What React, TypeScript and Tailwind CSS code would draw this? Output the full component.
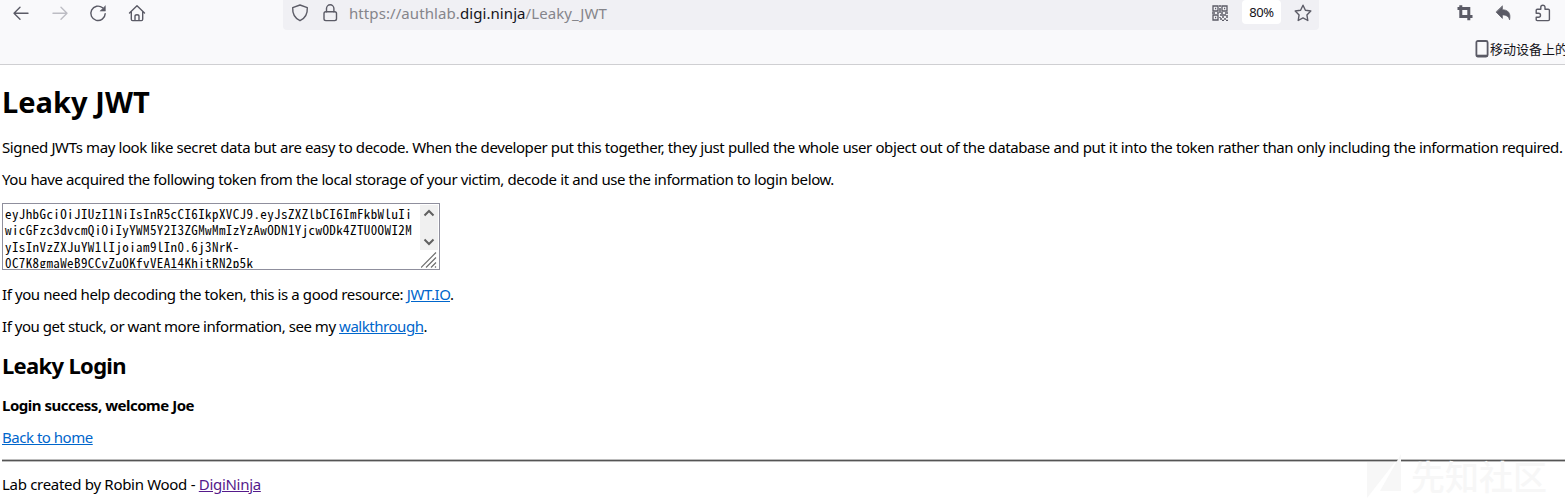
import type { ReactNode } from "react";

const stroke = {
  fill: "none",
  stroke: "currentColor",
  strokeWidth: 1.4,
  strokeLinecap: "round" as const,
  strokeLinejoin: "round" as const,
};

function Icon({ children, className = "" }: { children: ReactNode; className?: string }) {
  return (
    <svg viewBox="0 0 18 18" className={`h-[18px] w-[18px] shrink-0 text-[#5b5b66] ${className}`} {...stroke}>
      {children}
    </svg>
  );
}

function Toolbar() {
  return (
    <div className="flex h-[30px] items-start">
      <div className="flex w-[283px] shrink-0 gap-[21px] pl-3 pt-1">
        <Icon><path d="M16 9.3H2M8 3.3l-6 6 6 6" /></Icon>
        <Icon className="text-[#bdbdc4]"><path d="M2 9.3h14M10 3.3l6 6-6 6" /></Icon>
        <Icon className="-ml-[1px]">
          <path d="M16.2 9.6A7.2 7.2 0 1 1 13.6 3.8" />
          <path d="M16.4 2v5.1h-5.1z" fill="currentColor" strokeWidth=".5" />
        </Icon>
        <Icon>
          <path d="M1.5 9 9 1.7 16.5 9M3.3 7.8v7.5q0 1.3 1.3 1.3h8.8q1.3 0 1.3-1.3V7.8M7 16.5v-4.3q0-1.5 2-1.5t2 1.5v4.3" />
        </Icon>
      </div>
      <div className="flex h-[30px] w-[1036px] shrink-0 items-start rounded-b bg-[#f0f0f4] pl-2 pr-2">
        <Icon className="mt-1"><path d="M9 1 16.3 3.7C16.7 10.5 13.5 14.5 9 16.7 4.5 14.5 1.3 10.5 1.7 3.7Z" /></Icon>
        <Icon className="ml-3 mt-1">
          <rect x="3" y="7.8" width="12.5" height="8.8" rx="1.8" />
          <path d="M5.5 7.8V4.5a3.7 3.7 0 0 1 7.4 0v3.3" />
        </Icon>
        <div className="ml-[10px] whitespace-pre text-[15px] leading-[26px] tracking-[0.08px] text-[#85858b]">
          https://authlab.<span className="text-[#15141a]">digi.ninja</span>/Leaky_JWT
        </div>
        <div className="ml-auto flex items-start">
          <svg viewBox="0 0 16 16" className="mt-[5px] h-4 w-4 text-[#5b5b66]" fill="none" stroke="currentColor" strokeWidth="1.3">
            <path d="M1 1h5v5H1zM10 1h5v5h-5zM1 10h5v5H1z" />
            <path d="M3 3.5h1.2M12 3.5h1.2M3 12.5h1.2M8 0v2M7 4h2M8 5v3M0 8h3M5 8h2M9 8h2M13 8h3M8 10h2M12 10h2M10 12h2M14 12h2M8 14h2M12 14h2M8 12v1M10 15.4h2M14 15.4h2M11 9v2M15 10v1" strokeWidth="1.5" />
          </svg>
          <div className="ml-[14px] flex h-6 w-[39px] items-center justify-center rounded bg-white text-[13px] leading-4 tracking-[-0.4px] text-[#15141a]">80%</div>
          <Icon className="ml-[13px] mr-[-1px] mt-1"><path d="m9 1.2 2.4 5 5.4.8-3.9 3.9.9 5.6L9 13.9l-4.8 2.6.9-5.6L1.2 7l5.4-.8Z" /></Icon>
        </div>
      </div>
      <div className="ml-auto flex gap-[21px] pr-[14px] pt-1">
        <Icon>
          <path d="M4.8 1.2v11.3h11.7M1.5 4.5h11.3v11.8" strokeWidth="3" strokeLinecap="butt" strokeLinejoin="miter" />
        </Icon>
        <Icon>
          <path d="M7.4 2.2v3.5c5.6 0 8.7 3.5 7.2 10.2-.8-3.5-3-5-7.2-5v3.5L1.2 8.2z" fill="currentColor" strokeWidth=".7" />
        </Icon>
        <Icon className="-mr-[1px]">
          <path d="M2.2 8.2V6.3q0-1.1 1.1-1.1h3.5V3.3a2.1 2.1 0 0 1 4.2 0v1.900h3.300q1.100 0 1.100 1.100v9.200q0 1.100-1.100 1.100h-11q-1.100 0-1.100-1.100v-2.300h2.300a2 2 0 0 0 0-4H2.200Z" />
        </Icon>
      </div>
    </div>
  );
}

function Chevron({ d }: { d: string }) {
  return (
    <svg viewBox="0 0 12 8" className="h-2 w-3 text-[#606060]" fill="none" stroke="currentColor" strokeWidth="2">
      <path d={d} />
    </svg>
  );
}

const tokenLines = [
  "eyJhbGciOiJIUzI1NiIsInR5cCI6IkpXVCJ9.eyJsZXZlbCI6ImFkbWluIi",
  "wicGFzc3dvcmQiOiIyYWM5Y2I3ZGMwMmIzYzAwODN1YjcwODk4ZTU0OWI2M",
  "yIsInVzZXJuYW1lIjoiam9lIn0.6j3NrK-",
  "0C7K8gmaWeB9CCvZuQKfvVEA14KhitRN2p5k",
];

function TokenBox() {
  return (
    <div className="mt-3 flex h-[67px] w-[438px] justify-between overflow-hidden border border-[#8f8f9d] bg-white">
      <div className="mt-[2px] h-[62px] overflow-hidden pl-[2px] font-['Noto_Sans_Mono_CJK_SC','Liberation_Mono',monospace] text-[13px] leading-[16.4px] tracking-[0.4px]">
        {tokenLines.map((line) => (
          <div key={line} className="whitespace-pre">{line}</div>
        ))}
      </div>
      <div className="flex w-[19px] shrink-0 flex-col items-center pr-[1px] pt-[1px]">
        <div className="flex h-[45px] w-[18px] flex-col items-center justify-between bg-[#f0f0f0] py-[4px]">
          <Chevron d="m1.5 6.5 4.5-4.5 4.5 4.5" />
          <Chevron d="m1.5 1.5 4.5 4.5 4.5-4.5" />
        </div>
        <svg viewBox="0 0 16 16" className="mt-[2px] h-4 w-4" fill="none" stroke="#707070" strokeWidth="1.2">
          <path d="M0 15.5 15 .5M5 15.5 15 5.5M10 15.5l5-5M14 15.5l1-1" />
        </svg>
      </div>
    </div>
  );
}

const link = "text-[#0066cc] underline";

export default function App() {
  return (
    <div className="relative h-[501px] w-[1565px] overflow-hidden bg-white font-['Noto_Sans','Noto_Sans_CJK_SC',sans-serif] text-black">
      <header className="h-[65px] border-b border-[#cfcfd2] bg-[#f9f9fb]">
        <Toolbar />
        <div className="flex h-[34px] items-center justify-end overflow-hidden pt-[4px]">
          <div className="flex w-[90px] shrink-0 items-center">
            <svg viewBox="0 0 14 18" className="h-[18px] w-[14px] shrink-0" fill="none" stroke="#5b5b66" strokeWidth="1.8">
              <rect x="1.4" y="1" width="11.2" height="15.5" rx="1.5" />
              <path d="M1.5 15.8h11" strokeWidth="2.2" />
            </svg>
            <span className="ml-[1px] whitespace-nowrap font-['Noto_Sans_CJK_SC',sans-serif] text-[13px] leading-5 text-[#15141a]">移动设备上的</span>
          </div>
        </div>
      </header>
      <main className="whitespace-nowrap pl-[2px] pt-[17px] text-[15px] leading-6 tracking-[-0.4px]">
        <h1 className="h-10 text-[29px] font-bold leading-10 tracking-[0.05px]">Leaky JWT</h1>
        <p className="mt-[13px] tracking-[-0.395px]">
          Signed JWTs may look like secret data but are easy to decode. When the developer put this together, they just pulled the whole user object out of the database and put it into the token rather than only including the information required.
        </p>
        <p className="mt-2">You have acquired the following token from the local storage of your victim, decode it and use the information to login below.</p>
        <TokenBox />
        <p className="mt-3">If you need help decoding the token, this is a good resource: <a href="#jwt" className={link}>JWT.IO</a>.</p>
        <p className="mt-2 tracking-[-0.46px]">If you get stuck, or want more information, see my <a href="#walkthrough" className={link}>walkthrough</a>.</p>
        <h2 className="mt-[11px] h-8 text-[22px] font-bold leading-8 tracking-[-0.68px]">Leaky Login</h2>
        <p className="mt-3 font-bold tracking-[-0.48px]">Login success, welcome Joe</p>
        <p className="mt-2 tracking-[-0.48px]"><a href="#home" className={link}>Back to home</a></p>
        <hr className="mt-[10px] h-[3px] border-y border-t-[#bdbdbd] border-b-[#bdbdbd] bg-[#555]" />
        <p className="mt-[10px] tracking-[-0.3px]">Lab created by Robin Wood - <a href="#author" className="text-[#551a8b] underline">DigiNinja</a></p>
      </main>
      <div className="pointer-events-none absolute left-[1366px] top-[453px] flex items-center text-[#f7f7f7]">
        <svg viewBox="0 0 37 46" className="h-[46px] w-[37px]" fill="currentColor">
          <path d="M1 9h28L1 45zM35 1v37H14z" />
        </svg>
        <span className="ml-[8px] font-['Noto_Sans_CJK_SC',sans-serif] text-[34px] font-medium leading-[46px]">先知社区</span>
      </div>
    </div>
  );
}
